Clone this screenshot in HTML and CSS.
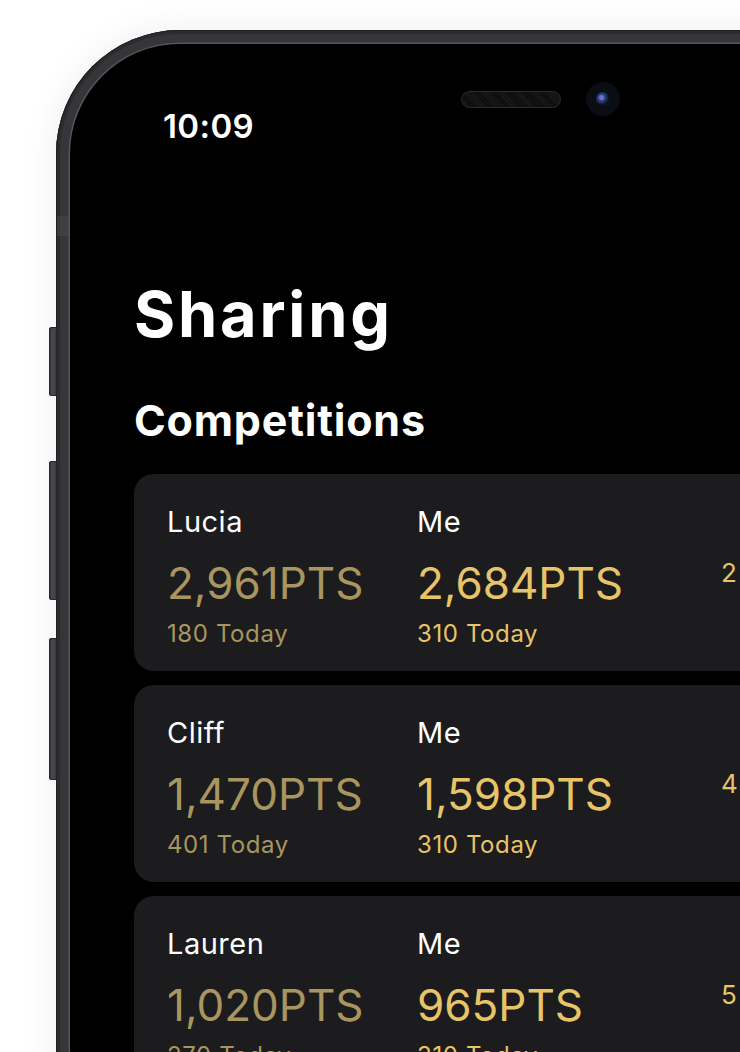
FILE: index.html
```html
<!DOCTYPE html>
<html lang="en">
<head>
<meta charset="utf-8">
<title>Sharing</title>
<link rel="stylesheet" href="styles.css">
</head>
<body>
<div class="stage">
  <div class="phone">
    <span class="btn btn-silent"></span>
    <span class="btn btn-vol-up"></span>
    <span class="btn btn-vol-down"></span>
    <span class="antenna"></span>
    <div class="screen">
      <span class="speaker"></span>
      <span class="camera"><span class="lens"></span></span>
      <div class="status">
        <span class="time">10:09</span>
        <span class="signal"></span>
      </div>
      <h1 class="title">Sharing</h1>
      <h2 class="section">Competitions</h2>
      <div class="cards">
        <div class="card">
          <div class="col">
            <div class="name">Lucia</div>
            <div class="pts muted">2,961PTS</div>
            <div class="today muted">180 Today</div>
          </div>
          <div class="col">
            <div class="name">Me</div>
            <div class="pts gold">2,684PTS</div>
            <div class="today gold">310 Today</div>
          </div>
          <div class="col side"><span class="gold">2</span></div>
        </div>
        <div class="card">
          <div class="col">
            <div class="name">Cliff</div>
            <div class="pts muted">1,470PTS</div>
            <div class="today muted">401 Today</div>
          </div>
          <div class="col">
            <div class="name">Me</div>
            <div class="pts gold">1,598PTS</div>
            <div class="today gold">310 Today</div>
          </div>
          <div class="col side"><span class="gold">4</span></div>
        </div>
        <div class="card">
          <div class="col">
            <div class="name">Lauren</div>
            <div class="pts muted">1,020PTS</div>
            <div class="today muted">270 Today</div>
          </div>
          <div class="col">
            <div class="name">Me</div>
            <div class="pts gold">965PTS</div>
            <div class="today gold">310 Today</div>
          </div>
          <div class="col side"><span class="gold">5</span></div>
        </div>
      </div>
    </div>
  </div>
</div>
</body>
</html>
```
FILE: styles.css
```css
html, body {
  margin: 0;
  padding: 0;
  background: #ffffff;
}
body {
  width: 740px;
  height: 1052px;
  overflow: hidden;
  font-family: Inter, "Liberation Sans", sans-serif;
}
.stage {
  padding: 30px 0 0 56px;
}
.phone {
  position: relative;
  width: 820px;
  height: 1140px;
  box-sizing: border-box;
  padding: 14px;
  border-radius: 124px;
  background: #36363a;
  box-shadow: inset 0 0 0 1px #1f1f21, inset 0 0 0 4px #2c2c2f, 0 0 36px rgba(0, 0, 0, 0.07);
}
.btn {
  position: absolute;
  left: -7px;
  width: 8px;
  border-radius: 3px 0 0 3px;
  background: linear-gradient(90deg, #2a2a2d, #4a4a4e 40%, #3a3a3d);
  box-shadow: inset 0 0 0 1px #262628;
}
.btn-silent { top: 297px; height: 69px; }
.btn-vol-up { top: 431px; height: 139px; }
.btn-vol-down { top: 608px; height: 142px; }
.antenna {
  position: absolute;
  left: 1px;
  top: 186px;
  width: 13px;
  height: 20px;
  background: #4a4a4e;
  opacity: 0.5;
}
.screen {
  position: relative;
  height: 100%;
  box-sizing: border-box;
  border-radius: 110px;
  background: #000;
  box-shadow: 0 0 0 1.5px #55555a;
  padding: 64px 0 0 65px;
  color: #fff;
  overflow: hidden;
}
.speaker {
  position: absolute;
  left: 391px;
  top: 47px;
  width: 100px;
  height: 17px;
  box-sizing: border-box;
  border-radius: 9px;
  border: 1.5px solid #2c2c2e;
  background: repeating-linear-gradient(45deg, #1a1a1b 0 1px, #0b0b0c 1px 2px);
}
.camera {
  position: absolute;
  left: 516px;
  top: 38px;
  width: 34px;
  height: 34px;
  border-radius: 50%;
  background: #0b0d14;
  display: flex;
  align-items: center;
  justify-content: center;
}
.lens {
  width: 14px;
  height: 14px;
  border-radius: 50%;
  background: radial-gradient(circle at 40% 40%, #7a6ad0 0 2px, #2a4a8a 3px, #172440 6px, #0d1222 7px);
}
.status {
  display: flex;
  align-items: flex-end;
  padding-left: 28px;
  height: 36px;
}
.time {
  font-family: Inter, "Liberation Sans", sans-serif;
  font-weight: 600;
  font-size: 33px;
  line-height: 36px;
  letter-spacing: 0.4px;
}
.signal {
  margin-left: 562px;
  margin-bottom: 6px;
  width: 5px;
  height: 8px;
  border-radius: 1.5px;
  background: #fff;
}
.title {
  margin: 139px 0 0 -1px;
  font-size: 63px;
  line-height: 62px;
  font-weight: 700;
  letter-spacing: 2.8px;
}
.section {
  margin: 54px 0 0 -1px;
  font-size: 43px;
  line-height: 42px;
  font-weight: 700;
  letter-spacing: 0.8px;
}
.cards {
  margin-top: 33px;
  margin-left: -1px;
  display: flex;
  flex-direction: column;
  gap: 14px;
}
.card {
  height: 197px;
  box-sizing: border-box;
  border-radius: 20px;
  background: #1c1c1e;
  padding: 31px 0 0 33px;
  display: flex;
}
.col {
  width: 250px;
  display: flex;
  flex-direction: column;
}
.col.side {
  width: 120px;
  margin-left: 54px;
  padding-top: 53px;
  font-size: 26px;
  line-height: 30px;
}
.name {
  font-size: 29px;
  line-height: 34px;
  font-weight: 400;
  letter-spacing: 0.5px;
  color: #fff;
}
.pts {
  margin-top: 21px;
  font-size: 44px;
  line-height: 46px;
  font-weight: 400;
}
.today {
  margin-top: 14px;
  font-size: 24px;
  line-height: 28px;
  letter-spacing: 0.6px;
}
.muted { color: #a8955f; }
.gold { color: #e8c468; }
```
